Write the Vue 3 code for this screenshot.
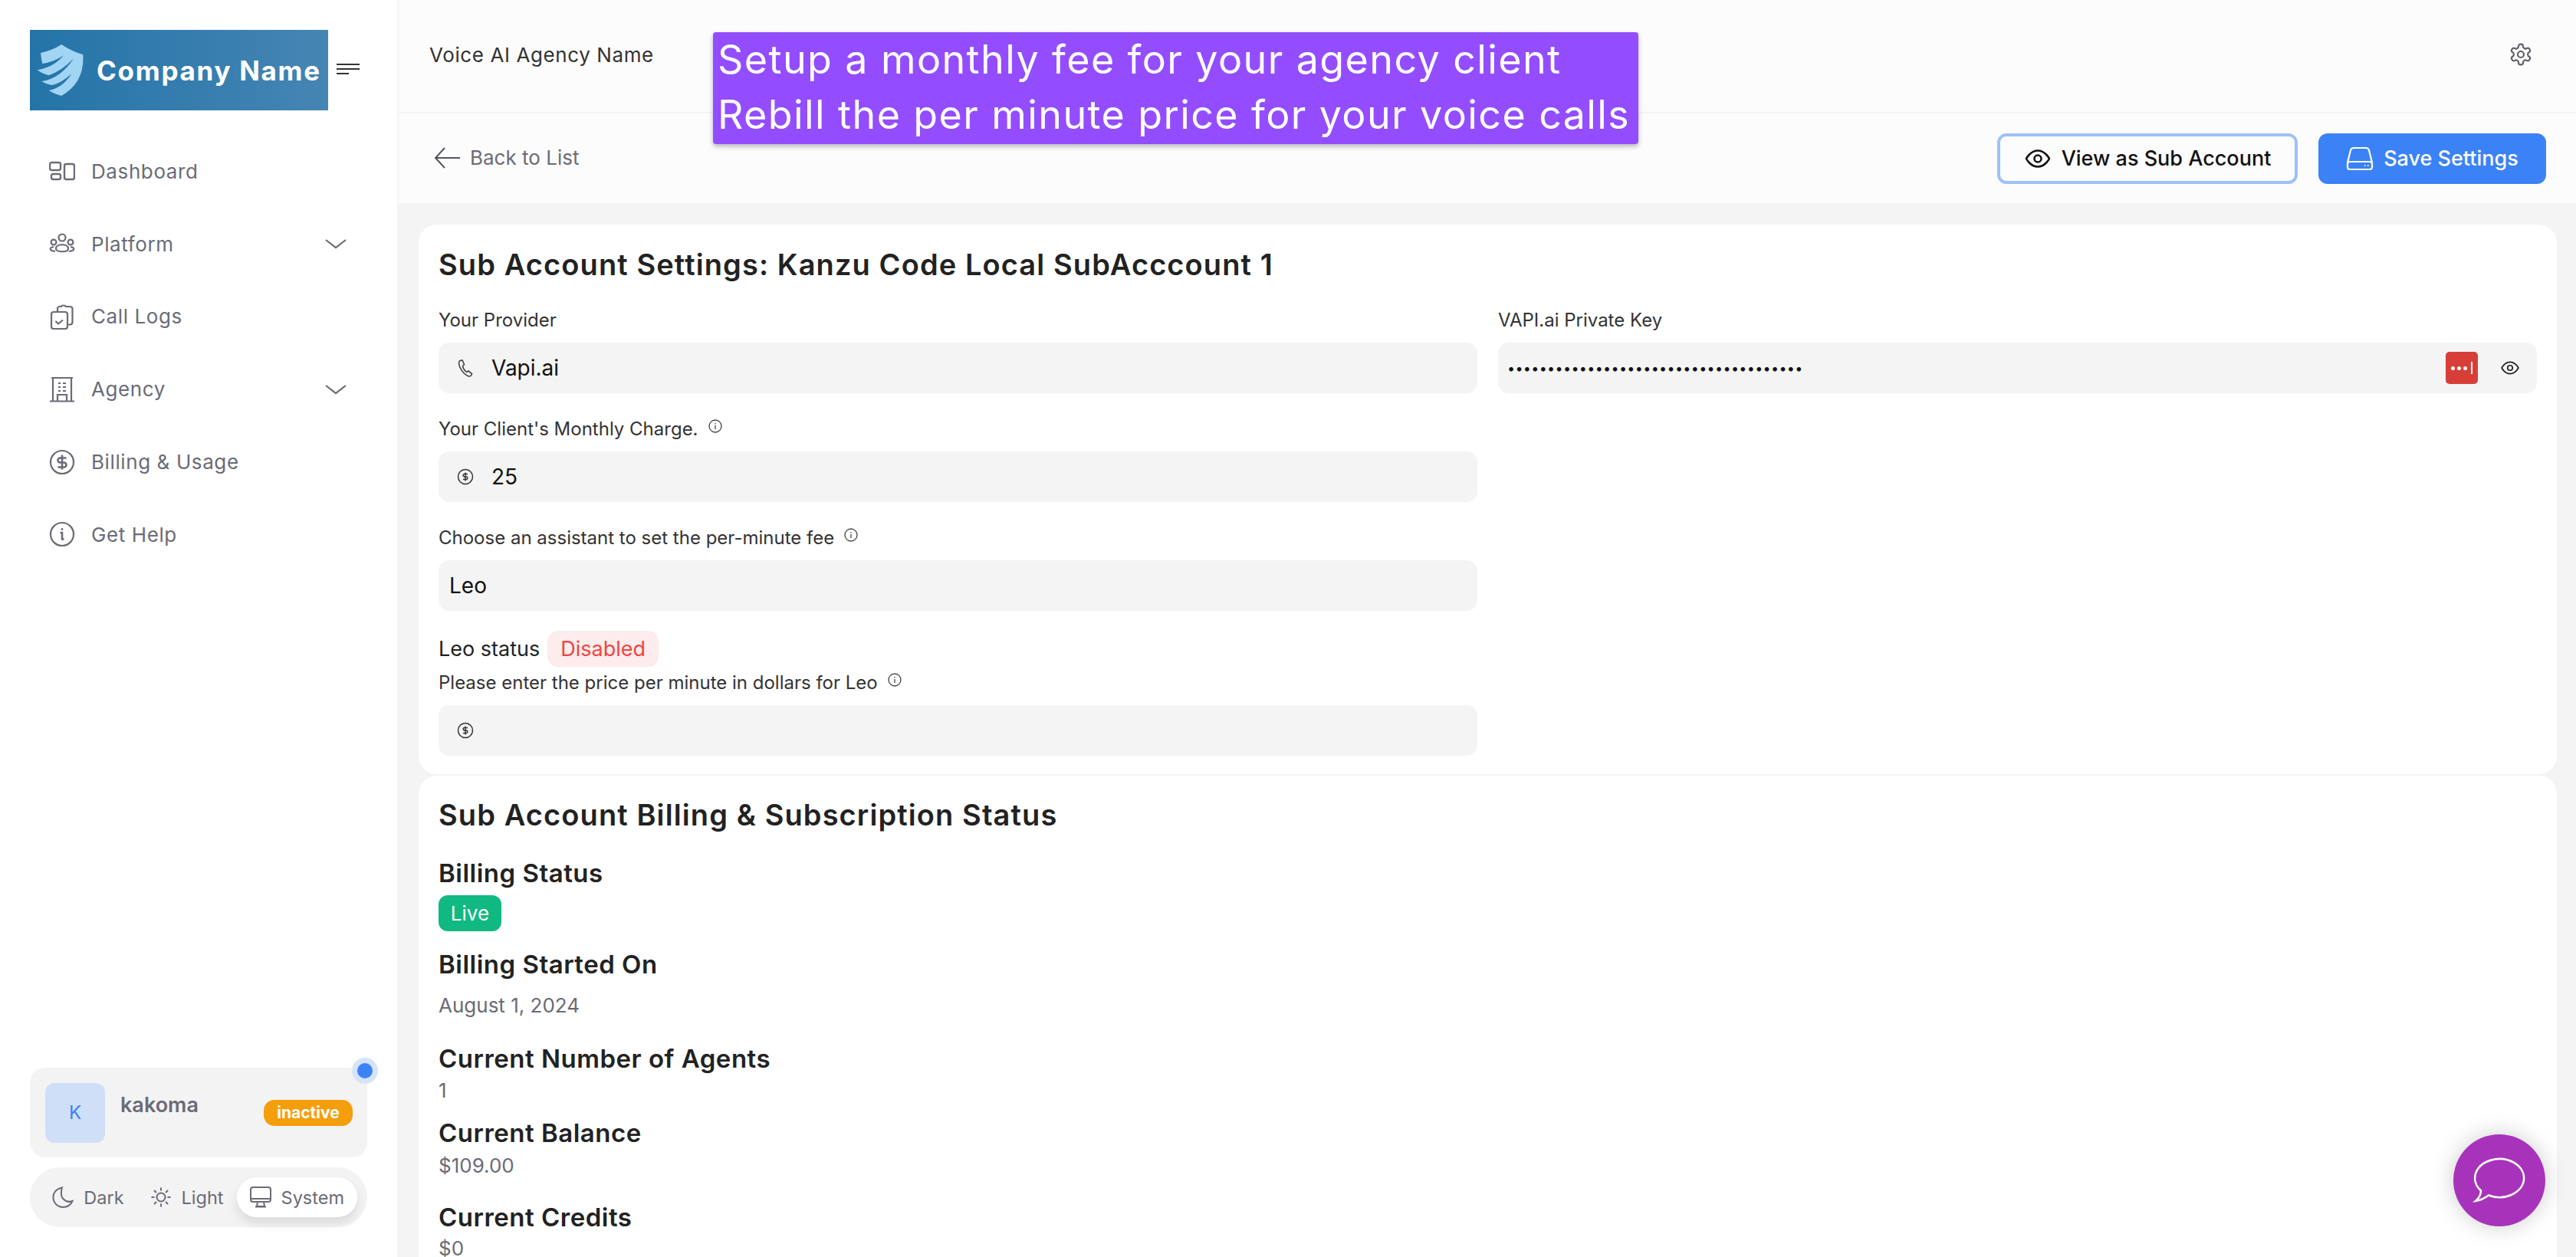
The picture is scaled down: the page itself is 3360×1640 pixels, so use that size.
<script setup>
const details = [
  { title: 'Billing Started On', value: 'August 1, 2024', cls: 'started' },
  { title: 'Current Number of Agents', value: '1', cls: 'agents' },
  { title: 'Current Balance', value: '$109.00', cls: 'balance' },
  { title: 'Current Credits', value: '$0', cls: 'credits' },
]
</script>

<template>
  <div class="page">
    <aside class="sidebar">
      <div class="brand">
        <div class="logo">
          <svg class="shield" viewBox="20 50 190 215" width="63" height="72">
            <path fill="#a2d4f4" d="M38 88 Q85 78 120 55 Q160 82 205 95 Q212 205 120 257 Q95 252 70 236 Q125 225 160 170 Q115 210 80 215 Q60 212 42 200 Q115 190 168 110 Q120 160 70 176 Q45 170 25 155 Q90 145 128 98 Q90 125 45 130 Q40 110 38 88 Z" />
          </svg>
          <span class="logo-text">Company Name</span>
        </div>
        <svg class="burger" width="30" height="16" viewBox="0 0 30 16" fill="none" stroke="#333" stroke-width="2">
          <path d="M0 2h30M0 8h30M0 14h16" />
        </svg>
      </div>

      <nav class="nav">
        <a class="nav-item">
          <svg class="nav-icon" viewBox="0 0 34 26" fill="none" stroke="#6b6b76" stroke-width="2.4">
            <rect x="1" y="2" width="14" height="10" rx="2.5" />
            <rect x="3" y="17" width="12" height="7" rx="2.5" />
            <rect x="20" y="4" width="13" height="20" rx="2.5" />
          </svg>
          <span>Dashboard</span>
        </a>
        <a class="nav-item">
          <svg class="nav-icon" viewBox="0 0 34 26" fill="none" stroke="#6b6b76" stroke-width="2.2">
            <circle cx="17" cy="5" r="4.5" />
            <circle cx="6" cy="11" r="3.4" />
            <circle cx="28" cy="11" r="3.4" />
            <path d="M9 19.5c0-7 16-7 16 0 0 5-16 5-16 0Z" />
            <path d="M6 17c-6 1-6 5 2 6M28 17c6 1 6 5-2 6" />
          </svg>
          <span>Platform</span>
          <svg class="chevron" width="28" height="14" viewBox="0 0 28 14" fill="none" stroke="#6b6b76" stroke-width="2.2">
            <path d="M1 2l13 10L27 2" />
          </svg>
        </a>
        <a class="nav-item">
          <svg class="nav-icon" viewBox="0 0 34 34" fill="none" stroke="#6b6b76" stroke-width="2.2" stroke-linejoin="round">
            <rect x="3" y="11" width="21" height="22" rx="3" />
            <path d="M11 11V6.5c0-1.5 1-2.5 2.5-2.5H16c.5-2 5-2 6 0h5c2 0 3.500 1 3.500 3v17c0 2-1 3.500-3 3.500h-3" />
            <path d="M8.500 23l3.500 3.500 6-5" />
          </svg>
          <span>Call Logs</span>
        </a>
        <a class="nav-item">
          <svg class="nav-icon" viewBox="0 0 34 34" fill="none" stroke="#6b6b76" stroke-width="2.2">
            <path d="M3 2h28M5 2v30M29 2v30M1 32.500h32" />
            <path d="M12 9h3M18 9h4M12 14h3M18 14h4M12 19h3M18 19h4" />
            <path d="M11 32v-8h12v8" />
          </svg>
          <span>Agency</span>
          <svg class="chevron" width="28" height="14" viewBox="0 0 28 14" fill="none" stroke="#6b6b76" stroke-width="2.2">
            <path d="M1 2l13 10L27 2" />
          </svg>
        </a>
        <a class="nav-item">
          <svg class="nav-icon" viewBox="0 0 34 34" fill="none" stroke="#6b6b76" stroke-width="2.2">
            <circle cx="17" cy="17" r="15" />
            <path stroke-width="2.600" d="M22.500 11.500h-8a3 3 0 0 0 0 6h5a3 3 0 0 1 0 6h-8M17 7.500v19" />
          </svg>
          <span>Billing &amp; Usage</span>
        </a>
        <a class="nav-item">
          <svg class="nav-icon" viewBox="0 0 34 34" fill="none" stroke="#6b6b76" stroke-width="2.2">
            <circle cx="17" cy="17" r="15" />
            <path stroke-width="2.600" d="M14.500 15h2.500v8.500h2.500" />
            <circle cx="17" cy="10.500" r="1.400" fill="#6b6b76" stroke="none" />
          </svg>
          <span>Get Help</span>
        </a>
      </nav>

      <div class="side-bottom">
        <div class="user-card">
          <span class="dot"></span>
          <div class="avatar">K</div>
          <div class="user-name">kakoma</div>
          <span class="inactive">inactive</span>
        </div>
        <div class="theme-switch">
          <div class="theme-item">
            <svg width="28" height="28" viewBox="0 0 28 28" fill="none" stroke="#6b6b76" stroke-width="2">
              <path d="M13 1.500C5 3 1 8.500 1.500 15c.5 7 6 12 12.500 12 6 0 10.500-3.500 12.500-8-8 3-18-3-13.500-17.500Z" />
            </svg>
            <span>Dark</span>
          </div>
          <div class="theme-item">
            <svg width="28" height="28" viewBox="0 0 28 28" fill="none" stroke="#6b6b76" stroke-width="2">
              <circle cx="14" cy="14" r="5.500" />
              <path d="M14 1.500v4M14 22.500v4M1.500 14h4M22.500 14h4M5 5l3 3M20 20l3 3M5 23l3-3M20 8l3-3" />
            </svg>
            <span>Light</span>
          </div>
          <div class="theme-item active">
            <svg width="28" height="28" viewBox="0 0 28 28" fill="none" stroke="#6b6b76" stroke-width="2">
              <rect x="1" y="1" width="26" height="19" rx="3" />
              <path d="M1 16h26M10 20l-1 6h10l-1-6M7 26.500h14" />
            </svg>
            <span>System</span>
          </div>
        </div>
      </div>
    </aside>

    <main class="main">
      <header class="topbar">
        <span class="agency-name">Voice AI Agency Name</span>
        <svg class="gear" width="32" height="32" viewBox="0 0 24 24" fill="none" stroke="#5f5f69" stroke-width="1.600" stroke-linejoin="round">
          <path d="M12.220 2h-.44a2 2 0 0 0-2 2v.18a2 2 0 0 1-1 1.730l-.43.25a2 2 0 0 1-2 0l-.15-.08a2 2 0 0 0-2.730.73l-.22.380a2 2 0 0 0 .73 2.730l.15.1a2 2 0 0 1 1 1.720v.510a2 2 0 0 1-1 1.740l-.15.09a2 2 0 0 0-.73 2.730l.22.380a2 2 0 0 0 2.730.73l.15-.08a2 2 0 0 1 2 0l.43.25a2 2 0 0 1 1 1.730V20a2 2 0 0 0 2 2h.44a2 2 0 0 0 2-2v-.18a2 2 0 0 1 1-1.730l.43-.25a2 2 0 0 1 2 0l.15.08a2 2 0 0 0 2.730-.73l.22-.390a2 2 0 0 0-.73-2.730l-.15-.08a2 2 0 0 1-1-1.740v-.5a2 2 0 0 1 1-1.740l.15-.09a2 2 0 0 0 .73-2.730l-.22-.380a2 2 0 0 0-2.730-.73l-.15.08a2 2 0 0 1-2 0l-.43-.25a2 2 0 0 1-1-1.730V4a2 2 0 0 0-2-2Z" />
          <circle cx="12" cy="12" r="3" />
        </svg>
      </header>

      <div class="callout">
        <div>Setup a monthly fee for your agency client</div>
        <div>Rebill the per minute price for your voice calls</div>
      </div>

      <div class="subbar">
        <a class="back">
          <svg width="34" height="28" viewBox="0 0 34 28" fill="none" stroke="#55555f" stroke-width="2">
            <path d="M14 1L2 14l12 13M2 14h32" />
          </svg>
          <span>Back to List</span>
        </a>
        <div class="actions">
          <button class="btn btn-outline">
            <svg width="36" height="36" viewBox="0 0 24 24" fill="none" stroke="#111" stroke-width="1.700">
              <path d="M2 12s3.500-7 10-7 10 7 10 7-3.500 7-10 7-10-7-10-7Z" />
              <circle cx="12" cy="12" r="3" />
            </svg>
            View as Sub Account
          </button>
          <button class="btn btn-primary">
            <svg width="36" height="32" viewBox="0 0 36 32" fill="none" stroke="#fff" stroke-width="2.200">
              <path d="M2 21L6 5c.5-2 2-3 4-3h16c2 0 3.500 1 4 3l4 16" />
              <rect x="2" y="20" width="32" height="10" rx="3" />
              <path d="M24 25h1.500M28 25h1.500" />
            </svg>
            Save Settings
          </button>
        </div>
      </div>

      <div class="content">
        <section class="card card-settings">
          <h2>Sub Account Settings: Kanzu Code Local SubAcccount 1</h2>
          <div class="form-grid">
            <div class="col">
              <label class="label">Your Provider</label>
              <div class="field">
                <svg class="field-icon" width="24" height="24" viewBox="0 0 24 24" fill="none" stroke="#444" stroke-width="1.600">
                  <path d="M5 2.500L8 2l2.500 5.500L8.500 9.500c.5 3 2.500 6 5 8l2.500-1.500 4.500 3.500-1 2.500c-1 1-3 1-4.500.5C9 19.500 4 12 3.500 6c0-1.500.5-3 1.500-3.500Z" />
                </svg>
                <input class="field-input" type="text" value="Vapi.ai" readonly />
              </div>

              <label class="label label-gap">
                Your Client's Monthly Charge.
                <svg class="info" width="18" height="18" viewBox="0 0 18 18" fill="none" stroke="#444" stroke-width="1.300">
                  <circle cx="9" cy="9" r="8" />
                  <path d="M9 8v5M9 5v1.500" />
                </svg>
              </label>
              <div class="field">
                <svg class="field-icon" width="24" height="24" viewBox="0 0 24 24" fill="none" stroke="#333" stroke-width="1.500">
                  <circle cx="12" cy="12" r="9.500" />
                  <path d="M15 8.500h-4.500a1.800 1.800 0 0 0 0 3.500h3a1.800 1.800 0 0 1 0 3.500H9M12 6.500v11" />
                </svg>
                <input class="field-input" type="text" value="25" readonly />
              </div>

              <label class="label label-gap">
                Choose an assistant to set the per-minute fee
                <svg class="info" width="18" height="18" viewBox="0 0 18 18" fill="none" stroke="#444" stroke-width="1.300">
                  <circle cx="9" cy="9" r="8" />
                  <path d="M9 8v5M9 5v1.500" />
                </svg>
              </label>
              <div class="field field-plain">
                <input class="field-input" type="text" value="Leo" readonly />
              </div>

              <div class="status-row">
                <span class="status-label">Leo status</span>
                <span class="disabled">Disabled</span>
              </div>

              <label class="label">
                Please enter the price per minute in dollars for Leo
                <svg class="info" width="18" height="18" viewBox="0 0 18 18" fill="none" stroke="#444" stroke-width="1.300">
                  <circle cx="9" cy="9" r="8" />
                  <path d="M9 8v5M9 5v1.500" />
                </svg>
              </label>
              <div class="field">
                <svg class="field-icon" width="24" height="24" viewBox="0 0 24 24" fill="none" stroke="#333" stroke-width="1.500">
                  <circle cx="12" cy="12" r="9.500" />
                  <path d="M15 8.500h-4.500a1.800 1.800 0 0 0 0 3.500h3a1.800 1.800 0 0 1 0 3.500H9M12 6.500v11" />
                </svg>
                <input class="field-input" type="text" readonly />
              </div>
            </div>

            <div class="col">
              <label class="label">VAPI.ai Private Key</label>
              <div class="field field-key">
                <input class="field-input key-input" type="password" value="sk-0000000000000000000000000000000000" readonly />
                <span class="lastpass">
                  <i></i><i></i><i></i><b></b>
                </span>
                <svg class="key-eye" width="26" height="26" viewBox="0 0 24 24" fill="none" stroke="#222" stroke-width="1.600">
                  <path d="M2 12s3.500-7 10-7 10 7 10 7-3.500 7-10 7-10-7-10-7Z" />
                  <circle cx="12" cy="12" r="3" />
                </svg>
              </div>
            </div>
          </div>
        </section>

        <section class="card card-billing">
          <h2>Sub Account Billing &amp; Subscription Status</h2>
          <h3 class="billing-status">Billing Status</h3>
          <span class="live">Live</span>
          <template v-for="item in details" :key="item.title">
            <h3 :class="item.cls">{{ item.title }}</h3>
            <p class="value" :class="item.cls + '-value'">{{ item.value }}</p>
          </template>
        </section>
      </div>

      <button class="chat">
        <svg width="120" height="120" viewBox="0 0 120 120" fill="none" stroke="#fff" stroke-width="2.600">
          <path d="M36 73.500A32 25 0 1 1 46 79.500Q37 86 29 87Q36 81 36 73.500Z" />
        </svg>
      </button>
    </main>
  </div>
</template>

<style>
html,
body {
  height: 100%;
  overflow: hidden;
  background: #fff;
}
</style>

<style scoped>
.page {
  display: flex;
  width: 100%;
  height: 100vh;
  overflow: hidden;
  font-family: Inter, 'Noto Sans', sans-serif;
  color: #222;
}

.sidebar {
  flex: 0 0 520px;
  min-width: 0;
  box-sizing: border-box;
  display: flex;
  flex-direction: column;
  background: #fff;
  border-right: 2px solid #f4f4f4;
  padding: 39px 0 39px 39px;
}

.brand {
  display: flex;
  align-items: center;
  gap: 11px;
}

.logo {
  width: 389px;
  height: 105px;
  box-sizing: border-box;
  display: flex;
  align-items: center;
  padding-left: 8px;
  gap: 16px;
  background: linear-gradient(90deg, #2474a8, #4585b3);
}

.shield {
  flex: none;
}

.logo-text {
  font-size: 35px;
  font-weight: 700;
  color: #fff;
  white-space: nowrap;
  letter-spacing: 1.7px;
}

.burger {
  margin-bottom: 3px;
}

.nav {
  margin-top: 32px;
  display: flex;
  flex-direction: column;
  padding-right: 66px;
}

.nav-item {
  height: 94.800px;
  display: flex;
  align-items: center;
  padding-left: 25px;
  font-size: 26px;
  color: #6b6b76;
  letter-spacing: 0.6px;
}

.nav-icon {
  width: 34px;
  height: 34px;
  margin-right: 21px;
  flex: none;
}

.chevron {
  margin-left: auto;
}

.side-bottom {
  margin-top: auto;
  margin-right: 39px;
  display: flex;
  flex-direction: column;
  gap: 13px;
}

.user-card {
  position: relative;
  height: 117px;
  box-sizing: border-box;
  display: flex;
  align-items: center;
  padding: 0 19px 0 20px;
  background: #f3f3f3;
  border-radius: 20px;
}

.dot {
  position: absolute;
  top: -6px;
  right: -7px;
  width: 20px;
  height: 20px;
  border-radius: 50%;
  background: #3b82f6;
  box-shadow: 0 0 0 7px #d5e4fb;
}

.avatar {
  width: 78px;
  height: 78px;
  border-radius: 12px;
  background: #cfdff8;
  color: #3b82f6;
  font-size: 24px;
  display: flex;
  align-items: center;
  justify-content: center;
}

.user-name {
  margin: 0 0 20px 20px;
  font-size: 27px;
  font-weight: 600;
  color: #6b6b76;
}

.inactive {
  margin-left: auto;
  height: 34px;
  width: 116px;
  border-radius: 14px;
  background: #f59e0b;
  color: #fff;
  font-size: 21px;
  font-weight: 700;
  display: flex;
  align-items: center;
  justify-content: center;
}

.theme-switch {
  height: 78px;
  box-sizing: border-box;
  display: flex;
  align-items: center;
  justify-content: flex-end;
  padding: 0 13px;
  border-radius: 39px;
  background: #f3f3f3;
}

.theme-item {
  height: 52px;
  display: flex;
  align-items: center;
  gap: 13px;
  padding: 0 17px;
  font-size: 23.500px;
  color: #6b6b76;
}

.theme-item.active {
  background: #fff;
  border-radius: 26px;
  box-shadow: 0 8px 14px rgba(0, 0, 0, 0.1);
}

.main {
  position: relative;
  flex: 1;
  min-width: 0;
  display: flex;
  flex-direction: column;
  background: #fcfcfc;
}

.topbar {
  height: 148px;
  flex: none;
  box-sizing: border-box;
  display: flex;
  align-items: center;
  justify-content: space-between;
  padding: 0 56px 4px 40px;
  border-bottom: 2px solid #f4f4f4;
}

.agency-name {
  font-size: 26px;
  letter-spacing: 0.6px;
  color: #333;
}

.callout {
  position: absolute;
  top: 42px;
  left: 410px;
  width: 1207px;
  height: 146px;
  box-sizing: border-box;
  padding-left: 6px;
  background: #934dff;
  border-radius: 4px;
  box-shadow: 0 3px 6px rgba(0, 0, 0, 0.28);
  color: #fff;
  font-size: 52px;
  letter-spacing: 1.4px;
  line-height: 72px;
  white-space: nowrap;
}

.subbar {
  height: 117px;
  flex: none;
  box-sizing: border-box;
  display: flex;
  align-items: center;
  justify-content: space-between;
  padding: 0 39px 0 46px;
}

.back {
  display: flex;
  align-items: center;
  gap: 13px;
  padding-bottom: 2px;
  font-size: 26px;
  color: #6b6b76;
}

.actions {
  display: flex;
  gap: 27px;
}

.btn {
  height: 66px;
  box-sizing: border-box;
  display: flex;
  align-items: center;
  gap: 13px;
  border-radius: 12px;
  font-family: inherit;
  font-size: 27px;
  font-weight: 500;
}

.btn-outline {
  width: 392px;
  justify-content: center;
  background: #fcfcfc;
  border: 4px solid #9dc1fa;
  color: #111;
}

.btn-primary {
  width: 297px;
  justify-content: center;
  background: #3b82f6;
  border: none;
  color: #fff;
}

.content {
  flex: 1;
  min-height: 0;
  background: #f4f4f4;
  padding: 28px 25px 0 26px;
  display: flex;
  flex-direction: column;
  gap: 2px;
}

.card {
  background: #fff;
  border-radius: 24px;
  padding: 0 26px;
}

.card-settings {
  flex: none;
  height: 717px;
  box-sizing: border-box;
  padding-top: 26px;
}

.card-billing {
  flex: 1;
  padding-top: 25px;
  border-radius: 24px 24px 0 0;
}

h2 {
  margin: 0;
  font-size: 38px;
  letter-spacing: 1.1px;
  line-height: 52px;
  font-weight: 600;
  color: #222;
}

.form-grid {
  margin-top: 28px;
  display: grid;
  grid-template-columns: 1fr 1fr;
  gap: 27px;
}

.col {
  display: flex;
  flex-direction: column;
}

.label {
  display: flex;
  align-items: center;
  height: 36px;
  margin-bottom: 12px;
  font-size: 24px;
  color: #333;
}

.label-gap {
  margin-top: 28px;
}

.info {
  margin: -6px 0 0 13px;
}

.field {
  height: 66px;
  box-sizing: border-box;
  display: flex;
  align-items: center;
  padding-left: 23px;
  background: #f4f4f4;
  border-radius: 14px;
}

.field-plain {
  padding-left: 14px;
}

.field-icon {
  flex: none;
  margin-right: 22px;
}

.field-input {
  flex: 1;
  min-width: 0;
  border: none;
  outline: none;
  background: transparent;
  padding: 0;
  font-family: inherit;
  font-size: 28px;
  color: #111;
}

.field-key {
  padding: 0 22px 0 12px;
}

.key-input {
  font-size: 18px;
  letter-spacing: 0.3px;
}

.lastpass {
  width: 42px;
  height: 42px;
  flex: none;
  border-radius: 5px;
  background: #d83e38;
  display: flex;
  align-items: center;
  justify-content: center;
  gap: 3px;
}

.lastpass i {
  width: 5px;
  height: 5px;
  border-radius: 50%;
  background: #fff;
}

.lastpass b {
  width: 1.500px;
  height: 16px;
  margin-left: 2px;
  background: #fff;
}

.key-eye {
  margin-left: 29px;
  flex: none;
}

.status-row {
  margin-top: 26px;
  height: 47px;
  margin-bottom: 2px;
  display: flex;
  align-items: center;
  gap: 10px;
  font-size: 27px;
}

.disabled {
  height: 47px;
  box-sizing: border-box;
  padding: 0 17px;
  display: flex;
  align-items: center;
  border-radius: 14px;
  background: #fdecec;
  color: #ef4444;
}

h3 {
  margin: 0;
  font-size: 33px;
  letter-spacing: 0.5px;
  line-height: 44px;
  font-weight: 600;
  color: #222;
}

.billing-status {
  margin-top: 28px;
}

.live {
  display: flex;
  align-items: center;
  justify-content: center;
  width: 82px;
  height: 47px;
  margin-top: 7px;
  border-radius: 12px;
  background: #10b981;
  color: #fff;
  font-size: 26px;
}

.value {
  margin: 0;
  font-size: 26px;
  line-height: 36px;
  color: #6b6b76;
}

.started {
  margin-top: 21px;
}

.started-value {
  margin-top: 14px;
}

.agents {
  margin-top: 29px;
}

.agents-value {
  margin-top: 2px;
}

.balance {
  margin-top: 15px;
}

.balance-value {
  margin-top: 3px;
}

.credits {
  margin-top: 27px;
}

.credits-value {
  margin-top: 1px;
}

.chat {
  position: absolute;
  left: 2680px;
  top: 1480px;
  width: 120px;
  height: 120px;
  padding: 0;
  border: none;
  border-radius: 50%;
  background: #a733bb;
  box-shadow: 0 0 30px rgba(0, 0, 0, 0.2);
}

.chat svg {
  display: block;
}
</style>
